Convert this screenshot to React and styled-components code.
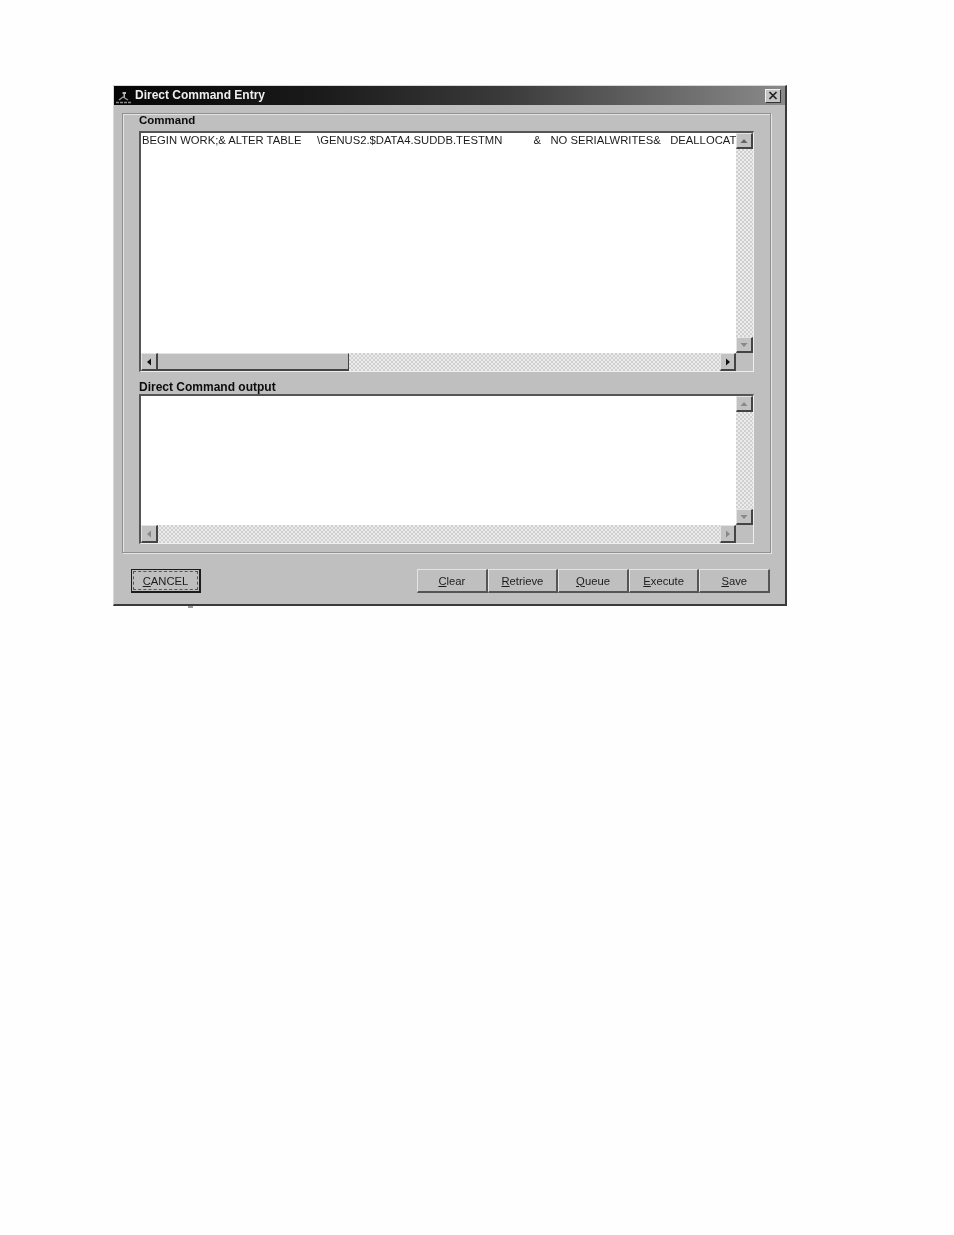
import React from 'react'
import styled, { createGlobalStyle } from 'styled-components'

const GlobalStyle = createGlobalStyle`
    html, body {
        margin: 0;
        padding: 0;
        background: #fefefe;
    }
    body {
        height: 1235px;
        overflow: hidden;
        font-family: "Liberation Sans", Arial, sans-serif;
    }
`
const Page = styled.div`
    padding: 85px 0 0 113px;
`
const Window = styled.div`
    position: relative;
    box-sizing: border-box;
    width: 674px;
    height: 521px;
    background: #bfbfbf;
    border-top: 1px solid #d8d8d8;
    border-left: 1px solid #d8d8d8;
    border-right: 2px solid #3a3a3a;
    border-bottom: 2px solid #3a3a3a;
    display: flex;
    flex-direction: column;
    filter: blur(0.6px);
`
const CursorTick = styled.div`
    position: absolute;
    left: 74px;
    bottom: -4px;
    width: 5px;
    height: 2px;
    background: #999;
`
const TitleBar = styled.div`
    height: 19px;
    background: linear-gradient(90deg, #050505 0%, #1a1a1a 30%, #3a3a3a 58%, #8a8a8a 100%);
    display: flex;
    align-items: center;
    padding: 0 4px 0 1px;
    flex-shrink: 0;
`
const TitleText = styled.span`
    color: #eeeeee;
    font-size: 12px;
    font-weight: 700;
    margin: -2px 0 0 2px;
    flex: 1;
    white-space: pre;
`
const CloseButton = styled.div`
    box-sizing: border-box;
    width: 16px;
    height: 14px;
    background: #c4c4c4;
    border-top: 1px solid #f0f0f0;
    border-left: 1px solid #f0f0f0;
    border-right: 1px solid #333;
    border-bottom: 1px solid #333;
    display: flex;
    align-items: center;
    justify-content: center;
`
const Panel = styled.div`
    box-sizing: border-box;
    width: 649px;
    height: 440px;
    margin: 8px 0 0 8px;
    padding: 1px 16px 0 16px;
    border: 1px solid #909090;
    box-shadow: 1px 1px 0 #e4e4e4, inset 1px 1px 0 #e4e4e4;
    flex-shrink: 0;
`
const FieldLabel = styled.div`
    color: #0c0c0c;
    font-size: ${(props) => props.size || 11.5}px;
    font-weight: 700;
    line-height: 11px;
    height: ${(props) => props.height}px;
    margin-top: ${(props) => props.top || 0}px;
    white-space: pre;
`
const Field = styled.div`
    box-sizing: border-box;
    width: 615px;
    height: ${(props) => props.height}px;
    background: #ffffff;
    border-top: 2px solid #555;
    border-left: 2px solid #555;
    border-right: 1px solid #eeeeee;
    border-bottom: 1px solid #eeeeee;
    display: grid;
    grid-template-columns: 1fr 17px;
    grid-template-rows: 1fr 18px;
`
const FieldText = styled.div`
    overflow: hidden;
    color: #1c1c1c;
    font-size: 11.25px;
    line-height: 14px;
    padding: 0 0 0 1px;
    white-space: pre;
`
const Checker = styled.div`
    background-color: #ffffff;
    background-image: repeating-conic-gradient(#d0d0d0 0 25%, #ececec 0 50%);
    background-size: 4px 4px;
`
const VTrack = styled(Checker)`
    display: flex;
    flex-direction: column;
    justify-content: space-between;
`
const HTrack = styled(Checker)`
    display: flex;
    justify-content: space-between;
    align-items: stretch;
`
const Corner = styled.div`
    background: #bfbfbf;
`
const ArrowButton = styled.div`
    box-sizing: border-box;
    width: ${(props) => props.width || 17}px;
    height: ${(props) => props.height || 16}px;
    flex-shrink: 0;
    background: #c2c2c2;
    border-top: 1px solid #e4e4e4;
    border-left: 1px solid #e4e4e4;
    border-right: 2px solid #444;
    border-bottom: 2px solid #444;
    display: flex;
    align-items: center;
    justify-content: center;
`
const Thumb = styled.div`
    box-sizing: border-box;
    flex: 0 0 ${(props) => props.width}px;
    background: #bfbfbf;
    border-top: 1px solid #e4e4e4;
    border-right: 1px solid #444;
    border-bottom: 2px solid #444;
`
const HLeft = styled.div`
    display: flex;
`
const Footer = styled.div`
    display: flex;
    justify-content: space-between;
    padding: 16px 15px 0 17px;
`
const ButtonGroup = styled.div`
    display: flex;
`
const PushButton = styled.div`
    box-sizing: border-box;
    width: 70.6px;
    height: 24px;
    background: #bfbfbf;
    border-top: 1px solid #e4e4e4;
    border-left: 1px solid #e4e4e4;
    border-right: 2px solid #555;
    border-bottom: 2px solid #555;
    color: #1c1c1c;
    font-size: 11.25px;
    display: flex;
    align-items: center;
    justify-content: center;
    u {
        text-underline-offset: 1px;
    }
`
const CancelButton = styled(PushButton)`
    width: 70px;
    border: 1px solid #1c1c1c;
    border-right-width: 2px;
    border-bottom-width: 2px;
    padding: 1px;
`
const FocusBox = styled.div`
    flex: 1;
    align-self: stretch;
    display: flex;
    align-items: center;
    justify-content: center;
    border: 1px dashed #555;
`

const Arrow = ({ dir, color = '#111' }) => {
    const points = {
        up: '0.5,6 4,2 7.5,6',
        down: '0.5,2 4,6 7.5,2',
        left: '6,0.5 2,4 6,7.5',
        right: '2,0.5 6,4 2,7.5',
    }
    return (
        <svg width="8" height="8" viewBox="0 0 8 8">
            <polygon points={points[dir]} fill={color} />
        </svg>
    )
}

const AppIcon = () => (
    <svg width="18" height="16" viewBox="0 0 18 16">
        <path d="M7.5 4 h3.5 v2 h-1 v4 h-1.5 v-4 h-1z" fill="#b8b8b8" />
        <path d="M4 12 L8 9 L13 12" stroke="#9a9a9a" strokeWidth="1.2" fill="none" />
        <path d="M1 14.5 h16" stroke="#8c8c8c" strokeWidth="1.5" strokeDasharray="3 1" />
    </svg>
)

const CloseIcon = () => (
    <svg width="10" height="9" viewBox="0 0 10 9">
        <path d="M1.5 1 L8.5 8 M8.5 1 L1.5 8" stroke="#222" strokeWidth="1.7" />
    </svg>
)

function App() {
    return (
        <>
            <GlobalStyle />
            <Page>
                <Window>
                    <TitleBar>
                        <AppIcon />
                        <TitleText>Direct Command Entry</TitleText>
                        <CloseButton><CloseIcon /></CloseButton>
                    </TitleBar>
                    <Panel>
                        <FieldLabel height={16}>Command</FieldLabel>
                        <Field height={241}>
                            <FieldText>{'BEGIN WORK;& ALTER TABLE     \\GENUS2.$DATA4.SUDDB.TESTMN          &   NO SERIALWRITES&   DEALLOCAT'}</FieldText>
                            <VTrack>
                                <ArrowButton><Arrow dir="up" color="#666" /></ArrowButton>
                                <ArrowButton><Arrow dir="down" color="#888" /></ArrowButton>
                            </VTrack>
                            <HTrack>
                                <HLeft>
                                    <ArrowButton height={18}><Arrow dir="left" /></ArrowButton>
                                    <Thumb width={191} />
                                </HLeft>
                                <ArrowButton width={16} height={18}><Arrow dir="right" /></ArrowButton>
                            </HTrack>
                            <Corner />
                        </Field>
                        <FieldLabel height={12} top={10} size={12}>Direct Command output</FieldLabel>
                        <Field height={150}>
                            <FieldText />
                            <VTrack>
                                <ArrowButton><Arrow dir="up" color="#888" /></ArrowButton>
                                <ArrowButton><Arrow dir="down" color="#888" /></ArrowButton>
                            </VTrack>
                            <HTrack>
                                <ArrowButton height={18}><Arrow dir="left" color="#888" /></ArrowButton>
                                <ArrowButton width={16} height={18}><Arrow dir="right" color="#888" /></ArrowButton>
                            </HTrack>
                            <Corner />
                        </Field>
                    </Panel>
                    <Footer>
                        <CancelButton>
                            <FocusBox><span><u>C</u>ANCEL</span></FocusBox>
                        </CancelButton>
                        <ButtonGroup>
                            <PushButton><span><u>C</u>lear</span></PushButton>
                            <PushButton><span><u>R</u>etrieve</span></PushButton>
                            <PushButton><span><u>Q</u>ueue</span></PushButton>
                            <PushButton><span><u>E</u>xecute</span></PushButton>
                            <PushButton><span><u>S</u>ave</span></PushButton>
                        </ButtonGroup>
                    </Footer>
                    <CursorTick />
                </Window>
            </Page>
        </>
    )
}

export default App
